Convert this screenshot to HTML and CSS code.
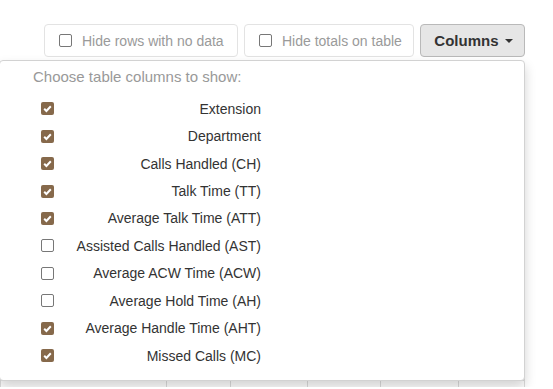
FILE: index.html
```html
<!DOCTYPE html>
<html lang="en">
<head>
    <meta charset="UTF-8">
    <meta name="viewport" content="width=device-width, initial-scale=1.0">
    <title>Report columns</title>
    <link rel="stylesheet" href="styles.css">
</head>
<body>
    <div class="toolbar">
        <label class="toggle"><span class="box"></span>Hide rows with no data</label>
        <label class="toggle toggle-totals"><span class="box"></span>Hide totals on table</label>
        <button class="columns-btn">Columns <span class="caret"></span></button>

        <div class="column-menu">
            <div class="menu-title">Choose table columns to show:</div>
            <div class="col-row"><span class="box checked"><svg viewBox="0 0 13 13"><path d="M3.2 6.8l2.2 2.2 4.4-4.8" /></svg></span><span class="col-name">Extension</span></div>
            <div class="col-row"><span class="box checked"><svg viewBox="0 0 13 13"><path d="M3.2 6.8l2.2 2.2 4.4-4.8" /></svg></span><span class="col-name">Department</span></div>
            <div class="col-row"><span class="box checked"><svg viewBox="0 0 13 13"><path d="M3.2 6.8l2.2 2.2 4.4-4.8" /></svg></span><span class="col-name">Calls Handled (CH)</span></div>
            <div class="col-row"><span class="box checked"><svg viewBox="0 0 13 13"><path d="M3.2 6.8l2.2 2.2 4.4-4.8" /></svg></span><span class="col-name">Talk Time (TT)</span></div>
            <div class="col-row"><span class="box checked"><svg viewBox="0 0 13 13"><path d="M3.2 6.8l2.2 2.2 4.4-4.8" /></svg></span><span class="col-name">Average Talk Time (ATT)</span></div>
            <div class="col-row"><span class="box"></span><span class="col-name">Assisted Calls Handled (AST)</span></div>
            <div class="col-row"><span class="box"></span><span class="col-name">Average ACW Time (ACW)</span></div>
            <div class="col-row"><span class="box"></span><span class="col-name">Average Hold Time (AH)</span></div>
            <div class="col-row"><span class="box checked"><svg viewBox="0 0 13 13"><path d="M3.2 6.8l2.2 2.2 4.4-4.8" /></svg></span><span class="col-name">Average Handle Time (AHT)</span></div>
            <div class="col-row"><span class="box checked"><svg viewBox="0 0 13 13"><path d="M3.2 6.8l2.2 2.2 4.4-4.8" /></svg></span><span class="col-name">Missed Calls (MC)</span></div>
        </div>
    </div>

    <table class="report">
        <tr class="head-row">
            <th></th><th></th><th></th><th></th><th></th><th></th>
        </tr>
        <tr>
            <td></td><td></td><td></td><td></td><td></td><td></td>
        </tr>
    </table>
</body>
</html>
```

FILE: styles.css
```css
body {
    margin: 0;
    font-family: "Liberation Sans", Arial, sans-serif;
    color: #333;
    background-color: #fff;
}
.toolbar {
    position: relative;
    display: flex;
    justify-content: flex-end;
    gap: 6px;
    padding: 24px 28px 0 0;
}
.toggle {
    display: flex;
    align-items: center;
    gap: 10px;
    height: 33px;
    box-sizing: border-box;
    padding: 0 8px 0 14px;
    border: 1px solid #e3e3e3;
    border-radius: 4px;
    color: #9a9a9a;
    font-size: 14px;
    white-space: nowrap;
    width: 194px;
}
.toggle-totals {
    width: 170px;
}
.box {
    display: inline-block;
    width: 13px;
    height: 13px;
    box-sizing: border-box;
    border: 1px solid #777;
    border-radius: 2px;
    background-color: #fff;
    flex: none;
}
.box.checked {
    border: none;
    background-color: #86694b;
}
.box svg {
    display: block;
    width: 13px;
    height: 13px;
    fill: none;
    stroke: #fff;
    stroke-width: 2;
}
.columns-btn {
    height: 33px;
    width: 105px;
    border: 1px solid #b9b9b9;
    border-radius: 4px;
    background-color: #e6e6e6;
    color: #333;
    font-family: inherit;
    font-size: 15px;
    font-weight: bold;
    padding: 0 0 0 2px;
}
.caret {
    display: inline-block;
    width: 0;
    height: 0;
    margin-left: 2px;
    vertical-align: 3px;
    border-top: 4px solid #333;
    border-left: 4px solid transparent;
    border-right: 4px solid transparent;
}
.column-menu {
    position: absolute;
    top: 60px;
    left: -1px;
    width: 526px;
    height: 321px;
    box-sizing: border-box;
    padding: 6px 0 0 0;
    background-color: #fff;
    border: 1px solid #d2d2d2;
    border-radius: 4px;
    box-shadow: 0 6px 12px rgba(0, 0, 0, 0.175);
    z-index: 2;
}
.menu-title {
    padding-left: 33px;
    font-size: 15px;
    line-height: 20px;
    color: #999;
    margin-bottom: 8px;
}
.col-row {
    display: grid;
    grid-template-columns: 13px 207px;
    align-items: center;
    height: 27.45px;
    padding-left: 41px;
    font-size: 14px;
}
.col-name {
    text-align: right;
}
.report {
    margin-top: 8px;
    width: 525px;
    border-collapse: collapse;
}
.report th,
.report td {
    border: 1px solid #ddd;
    border-bottom: none;
    padding: 0;
}
.head-row th {
    height: 314px;
}
.report td {
    height: 6px;
}
.report th:nth-child(1) { width: 165px; }
.report th:nth-child(2) { width: 63px; }
.report th:nth-child(3) { width: 76px; }
.report th:nth-child(4) { width: 72px; }
.report th:nth-child(5) { width: 77px; }
```
